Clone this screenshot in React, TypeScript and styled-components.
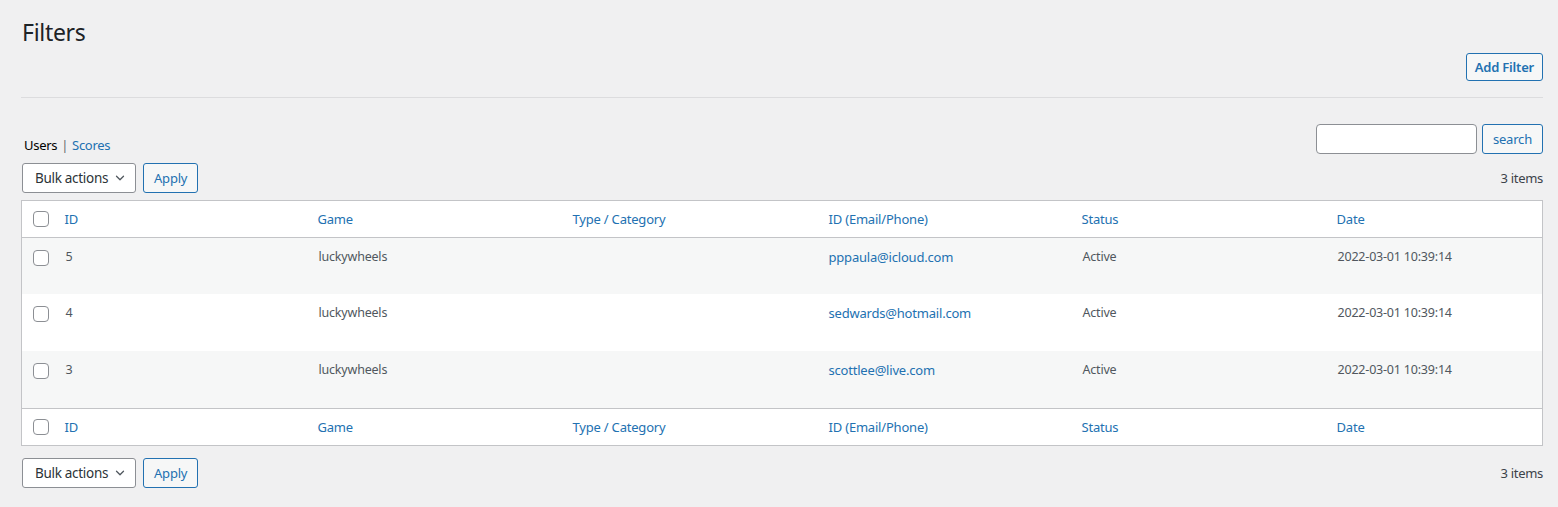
import React from "react";
import styled, { createGlobalStyle } from "styled-components";

const Global = createGlobalStyle`
  html, body { margin: 0; padding: 0; background: #f0f0f1; }
  body {
    font-family: "Noto Sans", "Open Sans", sans-serif;
    font-size: 13px;
    color: #3c434a;
    line-height: 1.4em;
  }
  * { box-sizing: border-box; }
`;

const Wrap = styled.div`
  margin: 0 15px 0 21px;
  padding-top: 9px;
`;

const Title = styled.h1`
  margin: 0;
  padding: 9px 0 5px 1px;
  font-size: 23px;
  font-weight: 400;
  line-height: 1.3;
  color: #1d2327;
  letter-spacing: -0.3px;
`;

const ActionRow = styled.div`
  display: flex;
  justify-content: flex-end;
`;

const Button = styled.button<{ $strong?: boolean; $h?: number }>`
  height: ${(p) => p.$h ?? 30}px;
  padding: 0 ${(p) => (p.$strong ? 8 : 10)}px;
  border: 1px solid #2271b1;
  border-radius: 3px;
  background: #f6f7f7;
  color: #2271b1;
  font-family: inherit;
  font-size: 13px;
  font-weight: ${(p) => (p.$strong ? 600 : 400)};
  letter-spacing: -0.2px;
  cursor: pointer;
  white-space: nowrap;
`;

const Rule = styled.hr`
  border: 0;
  border-top: 1px solid #dcdcde;
  margin: 16px 0 0;
  height: 0;
`;

const SearchRow = styled.div`
  display: flex;
  justify-content: space-between;
  align-items: flex-end;
  margin-top: 26px;
  height: 30px;
`;

const Views = styled.ul`
  list-style: none;
  margin: 0 0 -1px;
  padding: 0 0 0 3px;
  display: flex;
  align-items: center;
  gap: 4px;
  line-height: 20px;
  letter-spacing: -0.3px;
`;

const ViewItem = styled.li<{ $current?: boolean }>`
  color: ${(p) => (p.$current ? "#000" : "#2271b1")};
`;

const Sep = styled.span`
  color: #646970;
`;

const SearchBox = styled.div`
  display: flex;
  gap: 5px;
`;

const SearchInput = styled.input`
  width: 161px;
  height: 30px;
  border: 1px solid #8c8f94;
  border-radius: 4px;
  background: #fff;
  padding: 0 8px;
  font-family: inherit;
  font-size: 14px;
`;

const TableNav = styled.div<{ $top: number }>`
  display: flex;
  align-items: center;
  justify-content: space-between;
  height: 30px;
  margin-top: ${(p) => p.$top}px;
`;

const BulkGroup = styled.div`
  display: flex;
  gap: 7px;
  padding-left: 1px;
`;

const Select = styled.div`
  width: 114px;
  height: 30px;
  border: 1px solid #8c8f94;
  border-radius: 3px;
  background: #fff;
  display: flex;
  align-items: center;
  justify-content: space-between;
  padding: 0 8px 0 12px;
  color: #2c3338;
  font-size: 13.5px;
  letter-spacing: -0.3px;
`;

const Count = styled.span`
  color: #3c434a;
  letter-spacing: -0.3px;
`;

const Table = styled.table`
  width: 100%;
  margin-top: 7px;
  border-collapse: collapse;
  table-layout: fixed;
  background: #fff;
  border: 1px solid #c3c4c7;
`;

const HeadCell = styled.th<{ $top?: boolean }>`
  height: 37px;
  padding: 1px 10px 0;
  text-align: left;
  font-weight: 400;
  color: #2271b1;
  vertical-align: middle;
  letter-spacing: -0.2px;
  ${(p) => (p.$top ? "border-bottom: 1px solid #c3c4c7;" : "border-top: 1px solid #c3c4c7;")}
`;

const CheckCell = styled.td<{ $body?: boolean }>`
  padding: ${(p) => (p.$body ? "12px 0 0 11px" : "1px 0 0 11px")};
  vertical-align: ${(p) => (p.$body ? "top" : "middle")};
`;

const HeadCheckCell = styled(CheckCell)<{ $top?: boolean }>`
  height: 37px;
  ${(p) => (p.$top ? "border-bottom: 1px solid #c3c4c7;" : "border-top: 1px solid #c3c4c7;")}
`;

const Box = styled.span`
  display: block;
  width: 16px;
  height: 16px;
  border: 1px solid #8c8f94;
  border-radius: 4px;
  background: #fff;
`;

const Row = styled.tr<{ $alt: boolean }>`
  height: 57px;
  background: ${(p) => (p.$alt ? "#f6f7f7" : "#fff")};
`;

const Cell = styled.td<{ $link?: boolean }>`
  padding: 10px 10px 0 ${(p) => (p.$link ? 10 : 11)}px;
  vertical-align: top;
  line-height: 18px;
  color: ${(p) => (p.$link ? "#2271b1" : "#50575e")};
  font-size: ${(p) => (p.$link ? 13 : 12.5)}px;
  letter-spacing: -0.2px;
`;

const Chevron = () => (
  <svg width="14" height="14" viewBox="0 0 20 20" fill="none">
    <path d="M5 7.5l5 5 5-5" stroke="#50575e" strokeWidth="1.8" strokeLinecap="round" strokeLinejoin="round" />
  </svg>
);

const columns = ["ID", "Game", "Type / Category", "ID (Email/Phone)", "Status", "Date"];
const widths = [33, 253, 255, 256, 253, 255, 215];

const rows = [
  { id: "5", game: "luckywheels", email: "pppaula@icloud.com", status: "Active", date: "2022-03-01 10:39:14" },
  { id: "4", game: "luckywheels", email: "sedwards@hotmail.com", status: "Active", date: "2022-03-01 10:39:14" },
  { id: "3", game: "luckywheels", email: "scottlee@live.com", status: "Active", date: "2022-03-01 10:39:14" },
];

const Bulk = ({ top }: { top: number }) => (
  <TableNav $top={top}>
    <BulkGroup>
      <Select>
        <span>Bulk actions</span>
        <Chevron />
      </Select>
      <Button>Apply</Button>
    </BulkGroup>
    <Count>3 items</Count>
  </TableNav>
);

const HeaderRow = ({ top }: { top?: boolean }) => (
  <tr>
    <HeadCheckCell $top={top}>
      <Box />
    </HeadCheckCell>
    {columns.map((c) => (
      <HeadCell key={c} $top={top}>
        {c}
      </HeadCell>
    ))}
  </tr>
);

export default function App() {
  return (
    <>
      <Global />
      <Wrap>
        <Title>Filters</Title>
        <ActionRow>
          <Button $strong $h={28}>Add Filter</Button>
        </ActionRow>
        <Rule />
        <SearchRow>
          <Views>
            <ViewItem $current>Users</ViewItem>
            <Sep>|</Sep>
            <ViewItem>Scores</ViewItem>
          </Views>
          <SearchBox>
            <SearchInput type="search" />
            <Button>search</Button>
          </SearchBox>
        </SearchRow>
        <Bulk top={9} />
        <Table>
          <colgroup>
            {widths.map((w, i) => (
              <col key={i} style={{ width: i === widths.length - 1 ? undefined : w }} />
            ))}
          </colgroup>
          <thead>
            <HeaderRow top />
          </thead>
          <tbody>
            {rows.map((r, i) => (
              <Row key={r.id} $alt={i % 2 === 0}>
                <CheckCell $body>
                  <Box />
                </CheckCell>
                <Cell>{r.id}</Cell>
                <Cell>{r.game}</Cell>
                <Cell />
                <Cell $link>{r.email}</Cell>
                <Cell>{r.status}</Cell>
                <Cell>{r.date}</Cell>
              </Row>
            ))}
          </tbody>
          <tfoot>
            <HeaderRow />
          </tfoot>
        </Table>
        <Bulk top={12} />
      </Wrap>
    </>
  );
}
